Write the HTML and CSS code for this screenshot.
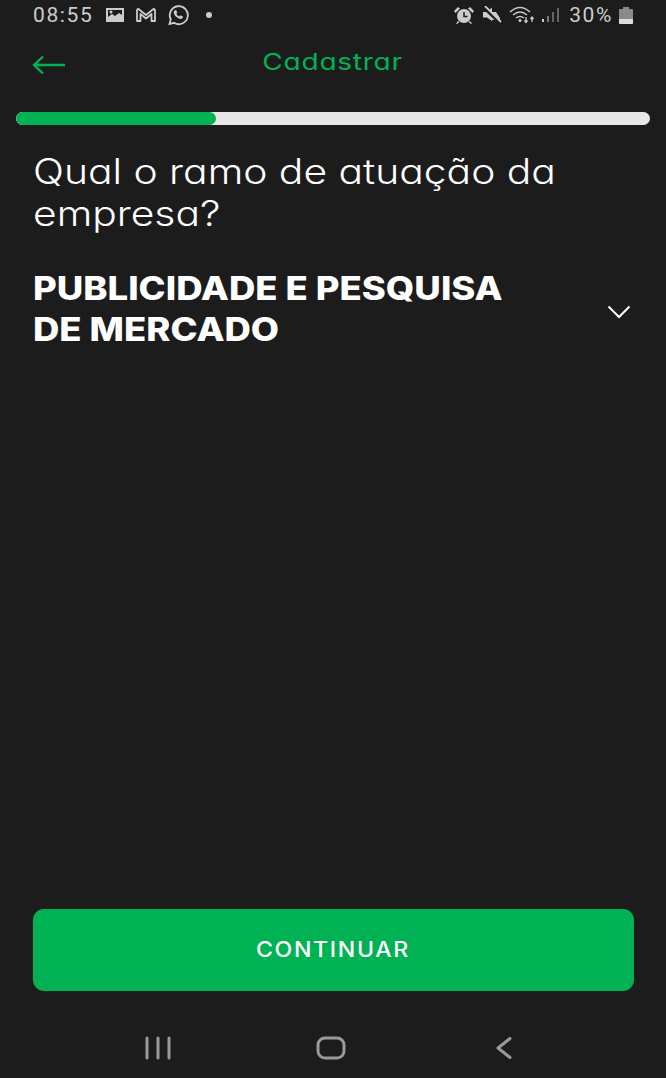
FILE: index.html
```html
<!DOCTYPE html>
<html lang="pt-BR">
<head>
<meta charset="utf-8">
<title>Cadastrar</title>
<link rel="stylesheet" href="styles.css">
</head>
<body>
<div class="app">
  <div class="status">
    <div class="status-left">
      <span class="time">08:55</span>
      <svg class="ic gallery" width="20" height="16" viewBox="0 0 20 16"><path fill="#ccc" fill-rule="evenodd" d="M1 1h18v14H1zM3 3v7l4-3 3 2 4-3 3 2V3z"/><circle cx="6" cy="5" r="1.5" fill="#ccc"/></svg>
      <svg class="ic gmail" width="22" height="16" viewBox="0 0 22 16"><path fill="none" stroke="#ccc" stroke-width="1.8" stroke-linejoin="round" d="M2 14V3.500Q2 2 3.500 2L11 8l7.500-6Q20 2 20 3.500V14h-3.500V7L11 11.500 5.500 7v7z"/></svg>
      <svg class="ic wa" width="22" height="22" viewBox="0 0 22 22"><path fill="none" stroke="#ccc" stroke-width="1.800" d="M2.500 20l1.300-4.700A9 9 0 1 1 7 18.800z"/><path fill="#ccc" d="M7.500 6.500l1.500-.5 1.300 2.500-1 1.200q1.200 2 3 2.800l1.200-1.200 2.500 1.300-.3 1.500q-1.200 1.200-3.200.6-4.500-1.500-5.700-5.700-.4-1.500.7-2.500z"/></svg>
      <span class="dot"></span>
    </div>
    <div class="status-right">
      <svg class="ic" width="22" height="18" viewBox="0 0 22 18"><circle cx="11" cy="10" r="7" fill="#ccc"/><path fill="none" stroke="#1c1c1c" stroke-width="1.500" d="M11 6v4.500h3.500"/><path fill="#ccc" d="M1 5l4-4 2 1.500-4.500 4.500zM21 5l-4-4-2 1.500 4.500 4.500zM5 15l-2 2.500 1 .5 2.500-2zM17 15l2 2.500-1 .5-2.500-2z"/></svg>
      <svg class="ic mute" width="20" height="18" viewBox="0 0 20 18"><path fill="#ccc" d="M1 6h4l5-4.500V15l-5-3.500H1z"/><path fill="#ccc" d="M10 6h4l4 6v2h-8z"/><path stroke="#1c1c1c" stroke-width="3" d="M1 1l17 16"/><path stroke="#ccc" stroke-width="1.800" d="M3 0l16 16"/></svg>
      <svg class="ic" width="26" height="18" viewBox="0 0 26 18"><g fill="none" stroke="#ccc" stroke-width="1.400"><path d="M1 6q10-9 20 0"/><path d="M4 9q7-6 14 0"/><path d="M7 12q4-3 8 0"/></g><circle cx="11" cy="14.500" r="1.500" fill="#ccc"/><path stroke="#ccc" stroke-width="1.300" d="M17 11v5M15.500 14.500l1.500 2 1.500-2M23 16v-5M21.500 13l1.500-2 1.500 2" fill="none"/></svg>
      <svg class="ic signal" width="18" height="16" viewBox="0 0 18 16"><rect x="0" y="12" width="2" height="3" fill="#ccc"/><rect x="5" y="9" width="2" height="6" fill="#777"/><rect x="10" y="5" width="2" height="10" fill="#666"/><rect x="15" y="1" width="2" height="14" fill="#666"/></svg>
      <span class="pct">30%</span>
      <svg class="ic battery" width="14" height="17" viewBox="0 0 14 17"><path fill="#8a8a8a" d="M4 0h6v2h3a1 1 0 0 1 1 1v13a1 1 0 0 1-1 1H1a1 1 0 0 1-1-1V3a1 1 0 0 1 1-1h3z"/><path fill="#ddd" d="M0 12h14v4a1 1 0 0 1-1 1H1a1 1 0 0 1-1-1z"/></svg>
    </div>
  </div>

  <header class="top">
    <svg class="back" width="34" height="20" viewBox="0 0 34 20"><path fill="none" stroke="#00b253" stroke-width="2.400" d="M33 10H2M11 1.500L2 10l9 8.500"/></svg>
    <h1 class="title">Cadastrar</h1>
  </header>

  <div class="progress"><div class="progress-fill" style="width:31.500%"></div></div>

  <main class="content">
    <h2 class="question"><span class="line">Qual o ramo de atuação da</span><span class="line">empresa?</span></h2>
    <div class="select">
      <div class="select-value"><span class="line">PUBLICIDADE E PESQUISA</span><span class="line">DE MERCADO</span></div>
      <svg class="chev" width="24" height="14" viewBox="0 0 24 14"><path fill="none" stroke="#fff" stroke-width="2" d="M1.500 1.500L12 12 22.500 1.500"/></svg>
    </div>
  </main>

  <button class="cta"><span class="cta-label">CONTINUAR</span></button>

  <nav class="nav">
    <svg width="28" height="24" viewBox="0 0 28 24"><path stroke="#999" stroke-width="3" stroke-linecap="round" d="M3 2v20M14 2v20M25 2v20"/></svg>
    <svg width="30" height="24" viewBox="0 0 30 24"><rect x="2" y="2" width="26" height="20" rx="7" fill="none" stroke="#999" stroke-width="3"/></svg>
    <svg class="nav-back" width="18" height="24" viewBox="0 0 18 24"><path fill="none" stroke="#999" stroke-width="3" stroke-linecap="round" stroke-linejoin="round" d="M15 2.500L3 12l12 9.500"/></svg>
  </nav>
</div>
</body>
</html>
```

FILE: styles.css
```css
* { box-sizing: border-box; }
html, body { margin: 0; height: 100%; }
body {
  background: #1c1c1c;
  font-family: Inter, "Liberation Sans", sans-serif;
  font-feature-settings: "cv11";
  color: #fff;
}
.app {
  height: 1078px;
  display: flex;
  flex-direction: column;
  overflow: hidden;
}
.status {
  height: 30px;
  padding: 0 33px;
  display: flex;
  justify-content: space-between;
  align-items: center;
  color: #ccc;
  font-family: Roboto, sans-serif;
  font-size: 21px;
}
.status-left, .status-right { display: flex; align-items: center; }
.status-left { gap: 10px; }
.status-right { gap: 7px; }
.time, .pct { letter-spacing: 1.600px; }
.time { margin-right: 2px; }
.pct { margin-left: 2px; margin-right: -1px; }
.ic { display: block; }
.wa { margin-top: -1px; }
.dot {
  width: 6px;
  height: 6px;
  border-radius: 50%;
  background: #ccc;
  margin-left: 7px;
}
.top {
  height: 64px;
  position: relative;
  display: flex;
  align-items: center;
  justify-content: center;
}
.back { position: absolute; left: 32px; top: 25px; }
.title {
  margin: 0;
  font-size: 23px;
  font-weight: 400;
  letter-spacing: .6px;
  color: #00b253;
  transform: scaleX(1.22);
}
.progress {
  margin: 18px 16px 0;
  height: 13px;
  border-radius: 7px;
  background: #e8e8e8;
  overflow: hidden;
}
.progress-fill { height: 100%; background: #00b253; border-radius: 7px; }
.content { flex: 1; padding: 25px 33px 0; }
.line {
  display: block;
  white-space: nowrap;
  transform-origin: left center;
}
.question {
  margin: 0;
  font-size: 35px;
  line-height: 42px;
  font-weight: 300;
  letter-spacing: 0;
}
.question .line { transform: scaleX(1.165); }
.select {
  margin-top: 34px;
  display: flex;
  align-items: center;
  justify-content: space-between;
  padding-right: 2px;
}
.select-value {
  font-size: 32px;
  line-height: 41px;
  font-weight: 800;
}
.select-value .line { transform: scaleX(1.14); }
.chev { margin-top: 6px; }
.cta {
  margin: 0 32px 0 33px;
  height: 82px;
  padding: 0 2px 2px 0;
  border: 0;
  border-radius: 11px;
  background: #00b253;
  color: #fff;
  font: inherit;
  font-size: 21px;
  font-weight: 500;
  letter-spacing: 1.500px;
}
.cta-label { display: inline-block; transform: scaleX(1.1); }
.nav {
  height: 87px;
  padding: 26px 0 0 144px;
  display: flex;
  align-items: center;
  gap: 144px;
}
.nav-back { margin-left: 5px; }
```
